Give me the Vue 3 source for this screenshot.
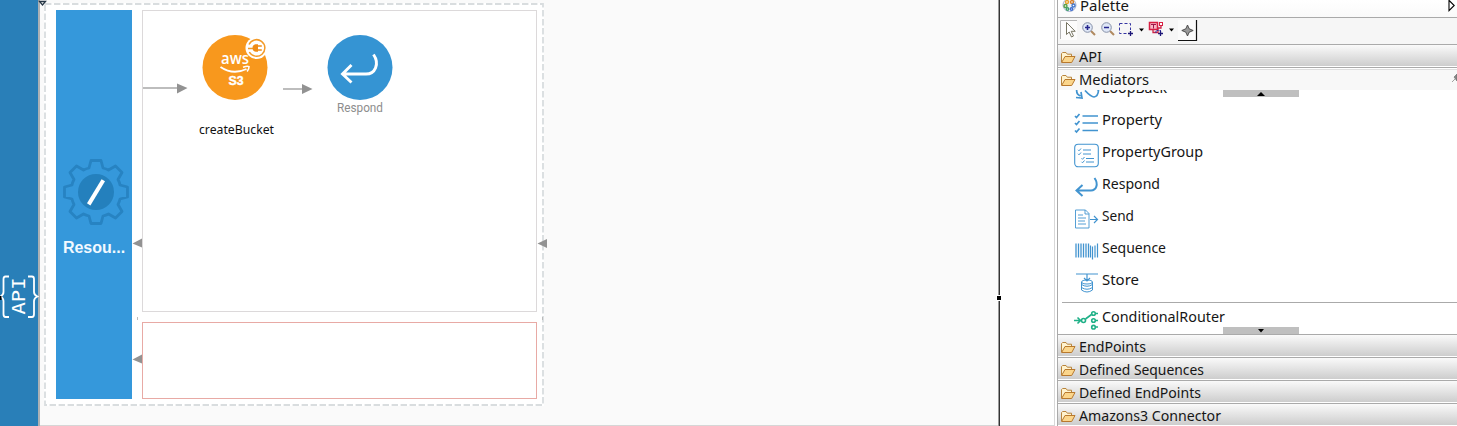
<script setup>
const items = [
  { name: 'Property', w: 60, icon: 'property' },
  { name: 'PropertyGroup', w: 101, icon: 'group' },
  { name: 'Respond', w: 58, icon: 'respond' },
  { name: 'Send', w: 32, icon: 'send' },
  { name: 'Sequence', w: 64, icon: 'sequence' },
  { name: 'Store', w: 37, icon: 'store' },
]
const drawers = [
  { name: 'EndPoints', w: 67 },
  { name: 'Defined Sequences', w: 125 },
  { name: 'Defined EndPoints', w: 122 },
  { name: 'Amazons3 Connector', w: 142 },
]
const bars = [0.5, 3, 5.5, 8, 10.5, 13]
</script>

<template>
  <svg class="defs" width="0" height="0">
    <defs>
      <symbol id="folder" viewBox="0 0 16 14">
        <path d="M1.500 11V2.600L2.600 1.500H6l1.300 1.700h4.200v2.300" fill="#fff3cf" stroke="#b8843c" />
        <path d="M1.600 11.500 5 5.500h10L11.700 11.500z" fill="#fbd68c" stroke="#b8792e" stroke-linejoin="round" />
      </symbol>
    </defs>
  </svg>
  <div class="app">
    <aside class="api">
      <svg class="api-icon" width="39" height="44" viewBox="0 0 39 44">
        <g fill="none" stroke="#fff" stroke-width="1.800">
          <path d="M9 1.500H5.500Q3.500 1.500 3.500 4V17Q3.500 20 .5 21.500Q3.500 23 3.500 26V39Q3.500 42 5.500 42H9" />
          <path d="M28 1.500h4Q34 1.500 34 4V17Q34 20 37.500 21.500Q34 23 34 26V39Q34 42 32 42H28" />
        </g>
        <text class="api-text" transform="translate(25 39.500) rotate(-90)" textLength="37" lengthAdjust="spacingAndGlyphs">API</text>
        <rect x="0" y="21" width="1.500" height="4" fill="#000" />
      </svg>
    </aside>

    <main class="canvas">
      <section class="resource">
        <svg class="dashes" width="500" height="403">
          <rect x="1" y="1" width="498" height="401" fill="none" stroke="#d9dddf" stroke-width="1.800" stroke-dasharray="6.400 2.600" />
        </svg>
        <div class="side">
          <svg width="66" height="66" viewBox="-33 -33 66 66">
            <path d="M-5-31.500H5L7-24Q10-23.300 12.500-22L19.500-26 26-19.500 22-12.500Q23.400-10 24-7L31.500-5V5L24 7Q23.400 10 22 12.500L26 19.500 19.500 26 12.500 22Q10 23.400 7 24L5 31.500H-5L-7 24Q-10 23.400-12.500 22L-19.500 26-26 19.500-22 12.500Q-23.400 10-24 7L-31.500 5V-5L-24-7Q-23.400-10-22-12.500L-26-19.500-19.500-26-12.500-22Q-10-23.300-7-24Z" fill="none" stroke="#2783c2" stroke-width="2.800" stroke-linejoin="round" />
            <circle r="18" fill="#2480bd" />
            <path d="M-7.300 12.400 7.300-11.800" stroke="#fff" stroke-width="4" />
          </svg>
          <b>Resou...</b>
        </div>
        <div class="flows">
          <div class="flow in"></div>
          <div class="flow fault"></div>
        </div>
      </section>

      <svg class="nodes" width="560" height="426">
        <g stroke="#bdbdbd" stroke-width="1.800">
          <path d="M143 88h35M283 89h20" />
        </g>
        <g fill="#929292">
          <path d="M177 83.500v10L187.500 88zM302 84v10L312.500 89zM142 238.500v9L132.500 243.500zM142 354.500v9L132.500 359.500zM547 239v9L537.500 243.500z" />
          <path d="M137 317h1v3h-1zM542 317h1v3h-1z" fill="#bbb" />
        </g>
        <circle cx="235" cy="67.500" r="32.500" fill="#f8981d" />
        <circle cx="256.500" cy="48" r="11" fill="#fff" />
        <path d="M249 44.500a8.300 8.300 0 1 1 .3 7.500M248 48.500h5.500" fill="none" stroke="#f39a27" stroke-width="1.500" />
        <path d="M258 44.300v7.400h-2.500q-3-.7-3-3.700t3-3.700zM258 45.300h3.800v1.400H258zM258 49.300h3.800v1.400H258z" fill="#f08c16" />
        <text class="aws" x="221" y="64" textLength="28" lengthAdjust="spacingAndGlyphs">aws</text>
        <path d="M220.500 67Q233 75.500 246.500 69" fill="none" stroke="#fff" stroke-width="1.900" />
        <path d="M243 67.300q4.500-1.500 6-.7q.2 2-1.900 4.900" fill="none" stroke="#fff" stroke-width="1.600" />
        <text class="s3" x="228.500" y="84.500" textLength="15" lengthAdjust="spacingAndGlyphs">S3</text>
        <text class="bucket" x="199" y="134" textLength="75" lengthAdjust="spacingAndGlyphs">createBucket</text>
        <circle cx="360" cy="67.500" r="32.500" fill="#3594d3" />
        <path d="M373.500 54.500C380 64 375 74 366 74H343M351.500 65 342.500 74l9 8.500" fill="none" stroke="#fff" stroke-width="2.900" />
        <text class="respond" x="337" y="111.600" textLength="46" lengthAdjust="spacingAndGlyphs">Respond</text>
        <path d="M39.500 1.500h6L42.500 5z" fill="#fff" stroke="#263746" stroke-width="1.300" />
      </svg>
    </main>
    <div class="edge"><i></i></div>
    <div class="blank"></div>

    <aside class="palette">
      <header class="title">
        <svg width="16" height="17" viewBox="0 0 16 17">
          <circle cx="7.500" cy="5" r="6.500" fill="#edf1f8" stroke="#a7b2cf" />
          <g fill="#fff" stroke-width="1.400">
            <circle cx="5" cy="2" r="1.500" stroke="#e9a32c" /><circle cx="10" cy="2" r="1.500" stroke="#d9822c" />
            <circle cx="3.500" cy="6" r="1.500" stroke="#58a046" /><circle cx="11.500" cy="5.500" r="1.500" stroke="#4779cb" />
            <circle cx="5.500" cy="9" r="1.200" stroke="#3fa06a" /><circle cx="9.500" cy="9" r="1.200" stroke="#3f6ed0" />
          </g>
        </svg>
        <svg class="label" width="60" height="17"><text x="0" y="11" textLength="49" lengthAdjust="spacingAndGlyphs">Palette</text></svg>
        <svg class="expand" width="8" height="17"><path d="M2 .3v10.400L7.200 5.500z" fill="#fff" stroke="#000" stroke-width="1.100" /></svg>
      </header>

      <div class="tools">
        <svg width="142" height="26" viewBox="1058 18 142 26">
          <rect x="1060" y="20" width="17" height="20" fill="#fcfcfc" />
          <path d="M1060.500 39V20.500H1077" fill="none" stroke="#b6b6b6" />
          <path d="M1066.500 22.500v12l2.700-2.500 2.300 5 2-1-2.300-4.700h4z" fill="#fff" stroke="#777563" />
          <path d="m1091 31 4 4M1110 31l4 4" stroke="#b08a60" stroke-width="2" />
          <g fill="#dfe7f7" stroke="#8791a7"><circle cx="1087.500" cy="27.500" r="4.800" /><circle cx="1106.500" cy="27.500" r="4.800" /></g>
          <path d="M1085 27.500h5M1087.500 25v5M1104 27.500h5" stroke="#26268d" stroke-width="1.600" />
          <path d="M1119.500 23.500h11v10h-11z" fill="none" stroke="#3434a2" stroke-dasharray="3 2" />
          <path d="M1127 30h7v7h-7z" fill="#f6f6f6" />
          <path d="M1128 33.500h5M1130.500 31v5M1158 33.500h5M1160.500 31v5" stroke="#1d1779" stroke-width="1.300" />
          <path d="M1139 28.500h5l-2.500 3zM1169 28.500h5l-2.500 3z" fill="#000" />
          <path d="M1149.500 22.500h8v7h-8z" fill="#f9b7c5" stroke="#d71f42" stroke-width="1.500" />
          <path d="M1151 24.500h5M1153.500 24.500v4" stroke="#9b1748" />
          <path d="M1153 30v2.500h5V28h3v-3" fill="none" stroke="#cc2447" stroke-width="1.300" />
          <rect x="1159.500" y="22.500" width="3" height="3" fill="#fff" stroke="#d71f42" />
          <path d="M1156 33v-2.500h5" fill="none" stroke="#33339d" stroke-dasharray="2 1" />
          <path d="M1178 20h19v21h-19z" fill="#fbfbfb" />
          <path d="M1178 40.500H1196.500V20" fill="none" stroke="#111" stroke-width="1.200" />
          <path d="m1187.500 25 1.700 3.800 4 1.700-4 1.700-1.700 3.800-1.700-3.800-4-1.700 4-1.700z" fill="#999" stroke="#444" stroke-width=".9" />
        </svg>
      </div>

      <div class="drawer api-drawer">
        <svg class="folder" width="16" height="14"><use href="#folder" /></svg>
        <svg class="label" width="180" height="20"><text x="0" y="15" textLength="23" lengthAdjust="spacingAndGlyphs">API</text></svg>
      </div>
      <div class="drawer open">
        <svg class="folder" width="16" height="14"><use href="#folder" /></svg>
        <svg class="label" width="180" height="20"><text x="0" y="15" textLength="70" lengthAdjust="spacingAndGlyphs">Mediators</text></svg>
        <svg class="pin" width="6" height="12"><path d="m1 10 3-3M3 5l3-3v7z" fill="#888" stroke="#666" stroke-width=".6" /></svg>
      </div>

      <div class="list">
        <div class="scroll up"><svg width="8" height="4"><path d="M0 4h8L4 0z" /></svg></div>
        <div class="item clipped">
          <svg class="glyph" width="26" height="24" viewBox="0 0 26 24">
            <path d="M3 9Q1.500 15 6.500 17M2 18.500l6 .5-1-6M11 11.500q6 6.500 9 6.500 4-.5 4.500-6.500L22 9" fill="none" stroke="#4294d0" stroke-width="1.700" />
          </svg>
          <svg class="label" width="140" height="20"><text x="0" y="12" textLength="65" lengthAdjust="spacingAndGlyphs">LoopBack</text></svg>
        </div>
        <div v-for="it in items" :key="it.name" class="item">
          <svg class="glyph" width="26" height="26" viewBox="0 -.5 26 26" fill="none" stroke="#4294d0">
            <template v-if="it.icon === 'property'">
              <path d="M8.500 5.500H24M8.500 12.500H24M8.500 20H24" stroke-width="1.500" />
              <path d="m1 5.500 1.500 1.500L5.500 3.500M1 12.500 2.500 14l3-3.500M1 20 2.500 21.500l3-3.500" stroke-width="1.700" />
            </template>
            <template v-else-if="it.icon === 'group'">
              <rect x=".7" y="1.700" width="23.600" height="22.600" rx="3.500" stroke-width="1.100" />
              <path d="M9 7.500h8M9 11.500h8M12 16h8M12 19.500h8" />
              <path d="m4 7.300 1 1 2-2.300M4 11.300l1 1L7 10M7.500 15.800l1 1 2-2.300M7.500 19.300l1 1 2-2.300" />
            </template>
            <path v-else-if="it.icon === 'respond'" d="M20.500 3.500C25 10 22 16 17 16H2M8.500 10.500 2.500 16l6 5.500" stroke-width="2" />
            <template v-else-if="it.icon === 'send'">
              <path d="M1.500 3.500h10l3.500 3.500v14.500H1.500zM11 3.500V7.500h4M4 8.500h5M4 11.500h8M4 14.500h7M4 17.500h8" stroke-width=".9" />
              <path d="M16 13h7.500M20 9.500l3.500 3.500-3.500 3.500" stroke-width="1.200" />
            </template>
            <template v-else-if="it.icon === 'sequence'">
              <path v-for="x in bars" :key="x" :d="`M${x + 1.5} 5V19`" stroke-width="1.300" />
              <path d="M16.500 7V19M18.500 8V21M21 7V19M23.500 5V19" stroke-width="1.200" />
            </template>
            <template v-else>
              <path d="M2 3.500H24M13 4v6M10 7.500l3 3 3-3" stroke-width="1.200" />
              <ellipse cx="13" cy="11.500" rx="5.500" ry="2" />
              <path d="M7.500 11.500v8q5.500 4 11 0V11.500M7.500 14q5.500 3.500 11 0M7.500 17q5.500 3.500 11 0" />
            </template>
          </svg>
          <svg class="label" width="140" height="20"><text x="0" y="15" :textLength="it.w" lengthAdjust="spacingAndGlyphs">{{ it.name }}</text></svg>
        </div>
        <div class="router">
          <svg class="glyph" width="26" height="26" viewBox="0 0 26 26" fill="none" stroke="#20b188" stroke-width="1.600">
            <path d="M0 14.500h6M3.500 11.500l3 3-3 3M11.500 13 17.500 8.500M21.500 7.500H24M21.500 14.500H24M21.500 21H24" />
            <circle cx="9.500" cy="14.500" r="2" /><circle cx="19.500" cy="7.500" r="1.800" /><circle cx="19.500" cy="14.500" r="1.800" /><circle cx="19.500" cy="21.200" r="1.800" />
          </svg>
          <svg class="label" width="140" height="20"><text x="0" y="15" textLength="123" lengthAdjust="spacingAndGlyphs">ConditionalRouter</text></svg>
        </div>
        <div class="scroll down"><svg width="6" height="4"><path d="M0 0h6L3 3.500z" /></svg></div>
      </div>

      <div v-for="d in drawers" :key="d.name" class="drawer">
        <svg class="folder" width="16" height="14"><use href="#folder" /></svg>
        <svg class="label" width="180" height="20"><text x="0" y="15" :textLength="d.w" lengthAdjust="spacingAndGlyphs">{{ d.name }}</text></svg>
      </div>
    </aside>
  </div>
</template>

<style>
body { margin: 0; overflow: hidden; }
</style>

<style scoped>
.defs { position: absolute; }
svg { display: block; flex: none; }
.app {
  display: flex;
  width: 1457px;
  height: 426px;
  overflow: hidden;
  background: #fff;
  font-family: "Noto Sans", "Open Sans", sans-serif;
}
.api {
  box-sizing: border-box;
  width: 40px;
  flex: none;
  padding-top: 275px;
  background: #297fb8;
  border-right: 2px solid #adb1b4;
}
.api-text { font: 17.5px "DejaVu Sans Mono", monospace; fill: #fff; }
.canvas {
  box-sizing: border-box;
  width: 958px;
  flex: none;
  padding: 3px 0 0 4px;
  background: #fafafa;
  border-bottom: 1px solid #d6d6d6;
}
.resource {
  position: relative;
  display: flex;
  gap: 10px;
  box-sizing: border-box;
  width: 500px;
  height: 403px;
  padding: 7px 7px 7px 12px;
  background: #fff;
}
.dashes { position: absolute; left: 0; top: 0; }
.side {
  width: 76px;
  height: 389px;
  background: #3598db;
  display: flex;
  flex-direction: column;
  align-items: center;
}
.side svg { margin: 149px 0 0 3px; }
.side b {
  margin-top: 13px;
  font: bold 16px/20px "Liberation Sans", sans-serif;
  color: #f2f9ff;
}
.flows { display: flex; flex-direction: column; gap: 10px; }
.flow { box-sizing: border-box; width: 395px; background: #fff; border: 1px solid #dcd9da; }
.flow.in { height: 302px; }
.flow.fault { height: 77px; border-color: #e8aaa5; }
.nodes { position: absolute; left: 0; top: 0; }
.aws { font: 600 17px "Open Sans", sans-serif; fill: #fff; }
.s3 { font: bold 12px "Liberation Sans", sans-serif; fill: #fff; stroke: #fff; stroke-width: .4px; }
.bucket { font-size: 12px; fill: #111; }
.respond { font: 12px Roboto, sans-serif; fill: #8d8d8d; }
.edge {
  width: 2px;
  flex: none;
  background: linear-gradient(90deg, #999 50%, #333 50%);
  position: relative;
}
.edge i {
  position: absolute;
  left: -2px;
  top: 295px;
  width: 4px;
  height: 4px;
  background: #000;
  border: 1px solid #fff;
}
.blank {
  box-sizing: border-box;
  width: 55px;
  flex: none;
  border-right: 1px solid #d8d8d8;
  border-bottom: 1px solid #d6d6d6;
}
.palette {
  box-sizing: border-box;
  flex: 1;
  min-width: 0;
  margin-left: 2px;
  border-left: 1px solid #aaa;
  background: #fff;
}
.label { overflow: visible; font-size: 14.5px; fill: #161616; }
.title {
  display: flex;
  height: 17px;
  padding: 0 2px 0 4px;
  background: linear-gradient(#fff, #fafafa);
  border-bottom: 1px solid #aaa;
}
.title .label { margin-left: 2px; }
.expand { margin-left: auto; }
.tools {
  display: flex;
  height: 26px;
  background: #f6f6f6;
  border-bottom: 1px solid #aaa;
}
.drawer {
  box-sizing: border-box;
  display: flex;
  height: 23px;
  padding: 2px 0 0 2px;
  background: linear-gradient(#fafafa, #cdcdcd 21px, #fff 21px);
  border-bottom: 1px solid #aaa;
}
.folder { margin-top: 4px; }
.drawer .label { margin-left: 3px; }
.drawer.open {
  height: 22px;
  background: linear-gradient(#fff 1px, #dedede 1px, #dedede 2px, #f8f8f8 2px);
  border: 0;
}
.pin { margin: 2px 0 0 auto; }
.list {
  box-sizing: border-box;
  position: relative;
  height: 245px;
  overflow: hidden;
  background: #fff;
  border-bottom: 1px solid #aaa;
}
.scroll {
  position: absolute;
  left: 165px;
  width: 76px;
  height: 7px;
  background: #bfbfbf;
  display: flex;
  justify-content: center;
  align-items: center;
}
.scroll.up { top: 0; }
.scroll.down { bottom: 0; }
.item { display: flex; height: 32px; padding-left: 16px; }
.item .label { margin-left: 2px; }
.item.clipped { height: 20px; }
.item.clipped .glyph { margin-top: -11px; }
.item.clipped .label { margin-top: -9px; }
.router {
  display: flex;
  height: 32px;
  margin-left: 4px;
  padding: 4px 0 0 12px;
  border-top: 1px solid #aaa;
}
.router .glyph { margin-top: -1px; }
.router .label { margin-left: 2px; }
</style>
